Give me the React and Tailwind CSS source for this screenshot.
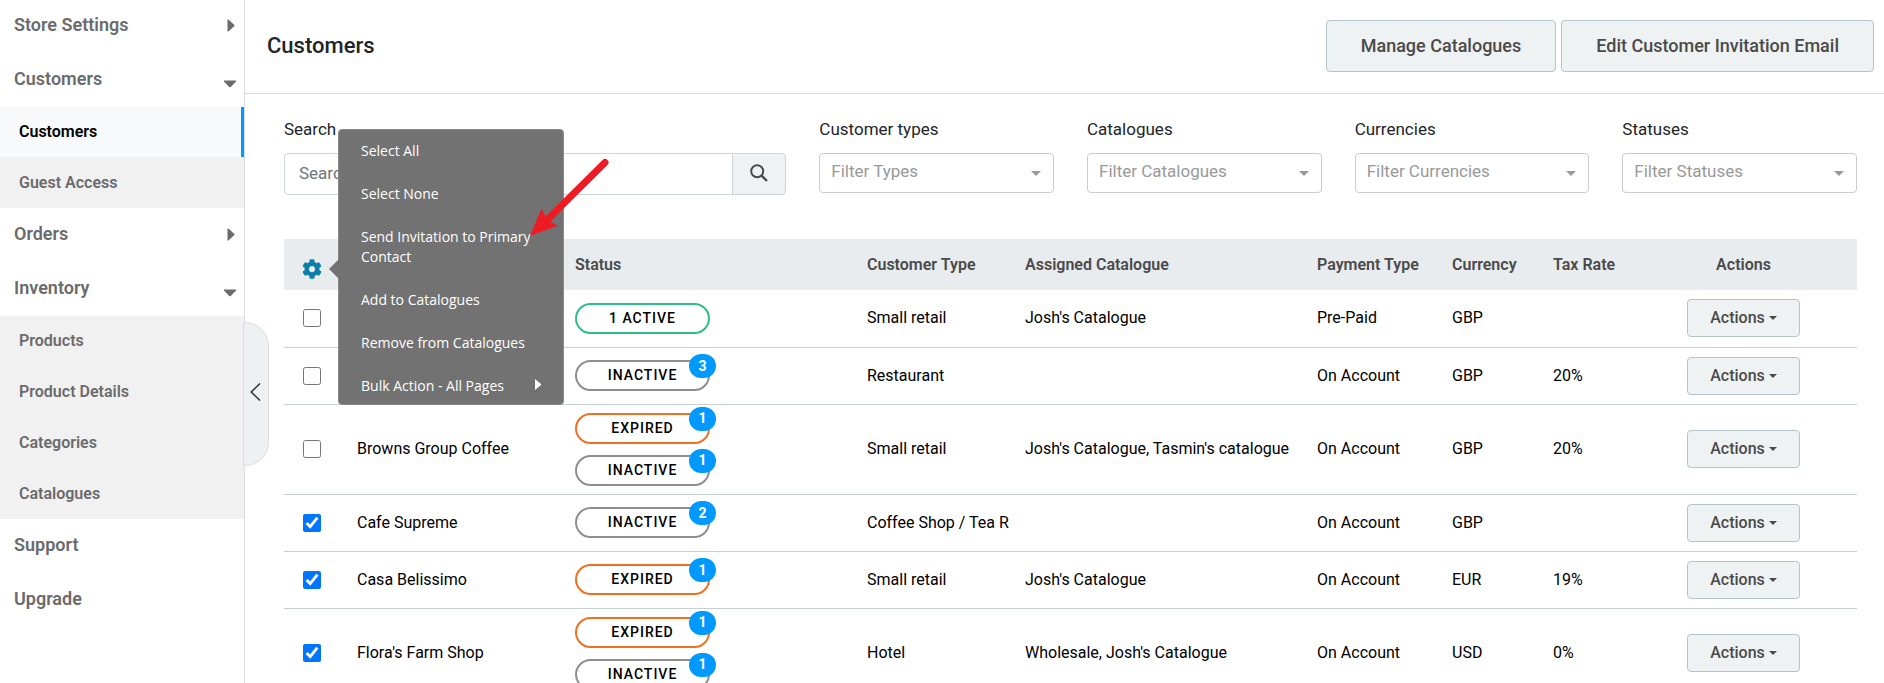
import { useState } from 'react';
import { FaCog } from 'react-icons/fa';

const NAV = [
  { label: 'Store Settings', arrow: 'right' },
  {
    label: 'Customers',
    arrow: 'down',
    children: ['Customers', 'Guest Access'],
  },
  { label: 'Orders', arrow: 'right' },
  {
    label: 'Inventory',
    arrow: 'down',
    children: ['Products', 'Product Details', 'Categories', 'Catalogues'],
  },
  { label: 'Support' },
  { label: 'Upgrade' },
];

const FILTERS = [
  { id: 'types', label: 'Customer types', placeholder: 'Filter Types' },
  { id: 'catalogues', label: 'Catalogues', placeholder: 'Filter Catalogues' },
  { id: 'currencies', label: 'Currencies', placeholder: 'Filter Currencies' },
  { id: 'statuses', label: 'Statuses', placeholder: 'Filter Statuses' },
];

const MENU = [
  'Select All',
  'Select None',
  'Send Invitation to Primary Contact',
  'Add to Catalogues',
  'Remove from Catalogues',
  'Bulk Action - All Pages',
];

const CUSTOMERS = [
  {
    id: 1,
    name: '',
    statuses: [{ kind: 'active', label: '1 Active' }],
    type: 'Small retail',
    catalogue: "Josh's Catalogue",
    payment: 'Pre-Paid',
    currency: 'GBP',
    tax: '',
  },
  {
    id: 2,
    name: '',
    statuses: [{ kind: 'inactive', label: 'Inactive', count: 3 }],
    type: 'Restaurant',
    catalogue: '',
    payment: 'On Account',
    currency: 'GBP',
    tax: '20%',
  },
  {
    id: 3,
    name: 'Browns Group Coffee',
    statuses: [
      { kind: 'expired', label: 'Expired', count: 1 },
      { kind: 'inactive', label: 'Inactive', count: 1 },
    ],
    type: 'Small retail',
    catalogue: "Josh's Catalogue, Tasmin's catalogue",
    payment: 'On Account',
    currency: 'GBP',
    tax: '20%',
  },
  {
    id: 4,
    name: 'Cafe Supreme',
    statuses: [{ kind: 'inactive', label: 'Inactive', count: 2 }],
    type: 'Coffee Shop / Tea Room',
    catalogue: '',
    payment: 'On Account',
    currency: 'GBP',
    tax: '',
  },
  {
    id: 5,
    name: 'Casa Belissimo',
    statuses: [{ kind: 'expired', label: 'Expired', count: 1 }],
    type: 'Small retail',
    catalogue: "Josh's Catalogue",
    payment: 'On Account',
    currency: 'EUR',
    tax: '19%',
  },
  {
    id: 6,
    name: "Flora's Farm Shop",
    statuses: [
      { kind: 'expired', label: 'Expired', count: 1 },
      { kind: 'inactive', label: 'Inactive', count: 1 },
    ],
    type: 'Hotel',
    catalogue: "Wholesale, Josh's Catalogue",
    payment: 'On Account',
    currency: 'USD',
    tax: '0%',
  },
];

const PILL_BORDER = {
  active: 'border-[#2dbe85]',
  inactive: 'border-[#8e8e8e]',
  expired: 'border-[#f07023]',
};

function NavArrow({ direction }) {
  if (direction === 'right') {
    return (
      <svg className="mt-[2px] mr-px h-[13px] w-2" viewBox="0 0 8 13" fill="currentColor" aria-hidden="true">
        <path d="M0.5 0.5H1.4L7.4 5.9Q7.8 6.5 7.4 7.1L1.4 12.5H0.5Z" />
      </svg>
    );
  }
  return (
    <svg className="mt-3 h-2 w-3" viewBox="0 0 12 8" fill="currentColor" aria-hidden="true">
      <path d="M0 0.5H12V1.4L6.8 7Q6 7.6 5.2 7L0 1.4Z" />
    </svg>
  );
}

function Sidebar() {
  return (
    <aside className="relative w-[245px] shrink-0 border-r border-[#dcdcdc] text-[#6b6b6b]">
      <nav className="-mt-px">
        {NAV.map((item) => (
          <div key={item.label}>
            <a
              href="#"
              className="flex h-[54px] items-center justify-between pr-2 pb-1 pl-[14px] text-[18px] font-semibold"
            >
              {item.label}
              {item.arrow && <NavArrow direction={item.arrow} />}
            </a>
            {item.children && (
              <ul className="flex flex-col gap-px bg-[#f1f1f1]">
                {item.children.map((child) => (
                  <li key={child}>
                    <a
                      href="#"
                      className={
                        child === 'Customers'
                          ? 'flex h-[50px] items-center border-r-3 border-[#0099ff] bg-[#f8f9fb] pl-[19px] text-[16px] font-semibold text-black'
                          : 'flex h-[50px] items-center pl-[19px] text-[16px] font-semibold'
                      }
                    >
                      {child}
                    </a>
                  </li>
                ))}
              </ul>
            )}
          </div>
        ))}
      </nav>
      <button
        type="button"
        aria-label="Collapse sidebar"
        className="absolute top-[322px] -right-[25px] flex h-36 w-[26px] items-center justify-center rounded-r-[24px] border border-[#dcdcdc] bg-[#edf1f2] pr-[2px] pb-1 text-[#333]"
      >
        <svg width="11" height="18" viewBox="0 0 11 18" fill="none" stroke="currentColor" strokeWidth="1.5" aria-hidden="true">
          <path d="M10 0.5L1.2 9L10 17.5" />
        </svg>
      </button>
    </aside>
  );
}

function Header() {
  const botao =
    'h-13 rounded-[4px] border border-[#b3c5ca] bg-[#eef2f3] px-[34px] pb-[2px] text-[18px] font-medium text-[#4a4a4a]';
  return (
    <header className="flex h-[94px] items-center justify-between border-b border-[#dcdcdc] pr-[10px] pb-px pl-[22px]">
      <h1 className="pb-[2px] text-[22px] font-medium text-[#212529]">Customers</h1>
      <div className="flex gap-[5px]">
        <button type="button" className={botao}>Manage Catalogues</button>
        <button type="button" className={botao}>Edit Customer Invitation Email</button>
      </div>
    </header>
  );
}

function Filters() {
  return (
    <form className="grid grid-cols-6 gap-x-[33px]" onSubmit={(event) => event.preventDefault()}>
      <div className="col-span-2">
        <label htmlFor="search" className="block pb-3 text-[17px] leading-6 text-[#212529]">
          Search
        </label>
        <div className="flex h-[42px]">
          <input
            id="search"
            type="text"
            placeholder="Search"
            className="min-w-0 flex-1 rounded-l-[4px] border border-[#ced4da] px-[14px] text-[17px] placeholder:text-[#6c757d]"
          />
          <button
            type="submit"
            aria-label="Search"
            className="-ml-px flex w-[54px] items-center justify-center rounded-r-[4px] border border-[#ced4da] bg-[#eef2f3] pb-[2px] text-[#4a4a4a]"
          >
            <svg width="18" height="18" viewBox="0 0 18 18" fill="none" stroke="currentColor" strokeWidth="2" aria-hidden="true">
              <circle cx="7.2" cy="7.2" r="6" />
              <path d="M11.6 11.6L17 17" strokeWidth="2.4" />
            </svg>
          </button>
        </div>
      </div>
      {FILTERS.map((filter) => (
        <div key={filter.id}>
          <label htmlFor={filter.id} className="block pb-3 text-[17px] leading-6 text-[#212529]">
            {filter.label}
          </label>
          <div className="relative">
            <select
              id={filter.id}
              defaultValue=""
              className="h-10 w-full appearance-none rounded-[4px] border border-[#cccccc] bg-white px-[11px] pb-[2px] text-[17px] text-[#999]"
            >
              <option value="">{filter.placeholder}</option>
            </select>
            <svg
              className="pointer-events-none absolute top-[18px] right-[13px] h-[5px] w-[10px] text-[#999]"
              viewBox="0 0 10 5"
              fill="currentColor"
              aria-hidden="true"
            >
              <path d="M0 0H10L5 5Z" />
            </svg>
          </div>
        </div>
      ))}
    </form>
  );
}

function BulkMenu() {
  return (
    <div className="absolute -top-[110px] left-[54px] z-10 w-[226px] rounded-[4px] border border-[#8a8a8a] bg-[#727272] font-['Open_Sans',sans-serif] text-[14px] leading-5 font-normal text-white">
      <svg className="absolute top-[129px] -left-[10px] h-5 w-[10px] text-[#727272]" viewBox="0 0 10 20" fill="currentColor" aria-hidden="true">
        <path d="M10 0V20L0 10Z" />
      </svg>
      <ul className="flex flex-col gap-px">
        {MENU.map((item) => (
          <li key={item} className="last:-mb-[3px]">
            <button
              type="button"
              className="flex w-full items-center justify-between px-[22px] py-[11px] text-left"
            >
              {item}
              {item.startsWith('Bulk') && (
                <svg className="mb-1 h-[11px] w-[6px]" viewBox="0 0 6 11" fill="currentColor" aria-hidden="true">
                  <path d="M0 0L6 5V6L0 11Z" />
                </svg>
              )}
            </button>
          </li>
        ))}
      </ul>
      {/* pointer to the invitation entry */}
      <svg className="pointer-events-none absolute top-[24px] left-[189px] h-[84px] w-[84px]" viewBox="528 154 84 84" aria-hidden="true">
        <path d="M605 162.5L546 221" stroke="#ed1c24" strokeWidth="7" strokeLinecap="round" />
        <path d="M530 236L541.5 208.5L546 217L551 222L558 225.5Z" fill="#ed1c24" />
      </svg>
    </div>
  );
}

function StatusPill({ status }) {
  return (
    <span
      className={`relative flex h-[31px] w-[135px] items-center justify-center rounded-full border-2 text-[14px] font-medium tracking-[1px] uppercase ${PILL_BORDER[status.kind]}`}
    >
      {status.label}
      {status.count && (
        <span className="absolute -top-2 -right-2 flex h-6 w-[27px] items-center justify-center rounded-full bg-[#0099ff] text-[14px] font-bold tracking-normal text-white">
          {status.count}
        </span>
      )}
    </span>
  );
}

export default function App() {
  const [selected, setSelected] = useState([4, 5, 6]);

  const toggle = (id) => {
    setSelected((atual) => (atual.includes(id) ? atual.filter((item) => item !== id) : [...atual, id]));
  };

  return (
    <div className="flex h-screen overflow-hidden bg-white font-[Roboto,sans-serif] text-black">
      <Sidebar />
      <main className="min-w-0 flex-1">
        <Header />
        <div className="pt-[23px] pr-[27px] pl-[39px]">
          <Filters />
          <table className="mt-11 w-full table-fixed text-left text-[16px]">
            <thead className="text-[#4a4a4a]">
              <tr className="h-[51px] bg-[#e8ecef] [&>th]:px-2 [&>th]:font-semibold">
                <th className="relative w-[65px]">
                  <button type="button" aria-label="Bulk actions" className="mt-2 ml-[10px] block text-[#0b7ea8]">
                    <FaCog size={20} />
                  </button>
                  <BulkMenu />
                </th>
                <th className="w-[218px]" aria-label="Customer" />
                <th className="w-[292px]">Status</th>
                <th className="w-[158px]">Customer Type</th>
                <th className="w-[292px]">Assigned Catalogue</th>
                <th className="w-[135px]">Payment Type</th>
                <th className="w-[101px]">Currency</th>
                <th className="w-[85px]">Tax Rate</th>
                <th className="w-[227px] text-center">Actions</th>
              </tr>
            </thead>
            <tbody>
              {CUSTOMERS.map((customer) => (
                <tr key={customer.id} className="h-[57px] border-b border-[#c5d1d5] [&>td]:px-2">
                  <td>
                    <input
                      type="checkbox"
                      aria-label={customer.name || `Customer ${customer.id}`}
                      checked={selected.includes(customer.id)}
                      onChange={() => toggle(customer.id)}
                      className="ml-[11px] block h-[18px] w-[18px]"
                    />
                  </td>
                  <td>{customer.name}</td>
                  <td>
                    <div className="flex flex-col gap-[11px] py-2">
                      {customer.statuses.map((status) => (
                        <StatusPill key={status.kind} status={status} />
                      ))}
                    </div>
                  </td>
                  <td>
                    <div className="overflow-hidden whitespace-nowrap">{customer.type}</div>
                  </td>
                  <td>{customer.catalogue}</td>
                  <td>{customer.payment}</td>
                  <td>{customer.currency}</td>
                  <td>{customer.tax}</td>
                  <td>
                    <button
                      type="button"
                      className="mx-auto flex h-[38px] w-[113px] items-center justify-center gap-1 rounded-[4px] border border-[#b3c5ca] bg-[#eef2f3] font-medium text-[#4a4a4a]"
                    >
                      Actions
                      <svg width="8" height="4" viewBox="0 0 8 4" fill="currentColor" aria-hidden="true">
                        <path d="M0 0H8L4 4Z" />
                      </svg>
                    </button>
                  </td>
                </tr>
              ))}
            </tbody>
          </table>
        </div>
      </main>
    </div>
  );
}
